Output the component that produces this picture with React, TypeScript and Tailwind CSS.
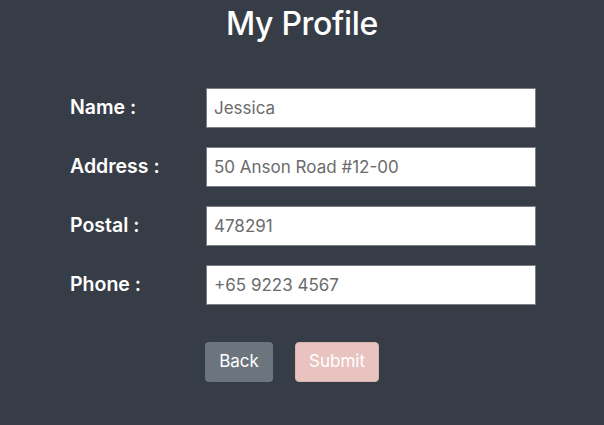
import { useState } from "react";

const fields = [
  { label: "Name :", value: "Jessica" },
  { label: "Address :", value: "50 Anson Road #12-00" },
  { label: "Postal :", value: "478291" },
  { label: "Phone :", value: "+65 9223 4567" },
];

export default function App() {
  const [values, setValues] = useState(fields.map((f) => f.value));

  return (
    <div
      className="h-[425px] w-full bg-[#373d46] text-white"
      style={{ fontFamily: "Inter, 'Noto Sans', sans-serif" }}
    >
      <h1 className="pt-[2px] text-center text-[32px] font-medium leading-[43px] tracking-[-0.3px]">
        My Profile
      </h1>

      <form className="mt-[43px] flex flex-col gap-[19px] pl-[70px]">
        {fields.map((f, i) => (
          <div key={f.label} className="flex items-center">
            <label className="w-[136px] text-[19.5px] font-semibold">{f.label}</label>
            <input
              value={values[i]}
              onChange={(e) =>
                setValues(values.map((v, j) => (j === i ? e.target.value : v)))
              }
              className="h-[40px] w-[330px] border border-[#7a7d82] bg-white px-[7px] text-[17px] text-[#6b6b6b] outline-none"
            />
          </div>
        ))}

        <div className="mt-[18px] flex gap-[22px] pl-[135px]">
          <button
            type="button"
            className="h-[40px] w-[68px] rounded-[4px] bg-[#6c757d] text-[17px] text-white"
          >
            Back
          </button>
          <button
            type="button"
            className="h-[40px] w-[84px] rounded-[4px] border border-[#d9b3b0] bg-[#e9c3c0] text-[17px] text-white"
          >
            Submit
          </button>
        </div>
      </form>
    </div>
  );
}
